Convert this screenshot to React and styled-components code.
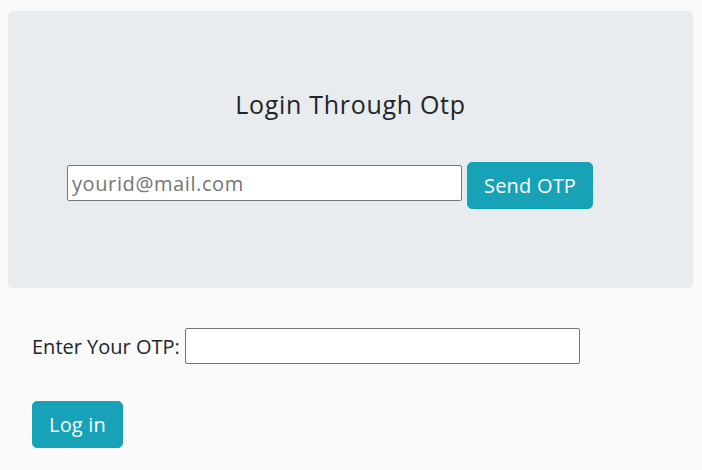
import React from "react";
import styled, { createGlobalStyle } from "styled-components";

const GlobalStyle = createGlobalStyle`
  html, body {
    margin: 0;
    padding: 0;
    background: #fafafa;
  }
  body {
    font-family: "Open Sans", "Liberation Sans", sans-serif;
    color: #212529;
  }
  * { box-sizing: border-box; }
`;

const Page = styled.div`
  width: 702px;
  padding: 11px 9px 0 8px;
`;

const Jumbotron = styled.section`
  height: 277px;
  background: #e9ecef;
  border-radius: 5px;
  padding-top: 79px;
`;

const Title = styled.h4`
  margin: 0;
  text-align: center;
  font-size: 25px;
  letter-spacing: 0.7px;
  font-weight: 400;
  line-height: 29px;
  color: #212529;
`;

const SendRow = styled.form`
  display: flex;
  align-items: flex-start;
  gap: 5px;
  margin-top: 43px;
  padding-left: 59px;
`;

const TextInput = styled.input`
  width: 395px;
  height: 36px;
  margin-top: ${(p) => p.$offset || 0}px;
  padding: 0 4px;
  border: 1px solid #767676;
  border-radius: 2px;
  background: #fff;
  font-family: inherit;
  font-size: 20px;
  letter-spacing: 0.6px;
  color: #212529;
  outline: none;
  &::placeholder {
    color: #757575;
  }
`;

const Button = styled.button`
  height: 47px;
  padding: 0 16px;
  border: 1px solid #17a2b8;
  border-radius: 5px;
  background: #17a2b8;
  color: #fff;
  font-family: inherit;
  font-size: 20px;
  letter-spacing: 0.2px;
  line-height: 1;
  cursor: pointer;
`;

const OtpSection = styled.section`
  padding: 40px 0 0 24px;
`;

const OtpRow = styled.div`
  display: flex;
  align-items: center;
  gap: 5px;
`;

const Label = styled.label`
  font-size: 20px;
  color: #212529;
`;

const LoginWrap = styled.div`
  margin-top: 37px;
`;

export default function App() {
  return (
    <>
      <GlobalStyle />
      <Page>
        <Jumbotron>
          <Title>Login Through Otp</Title>
          <SendRow onSubmit={(e) => e.preventDefault()}>
            <TextInput $offset={3} type="email" placeholder="yourid@mail.com" />
            <Button type="submit">Send OTP</Button>
          </SendRow>
        </Jumbotron>
        <OtpSection>
          <OtpRow>
            <Label htmlFor="otp">Enter Your OTP:</Label>
            <TextInput id="otp" type="text" />
          </OtpRow>
          <LoginWrap>
            <Button type="button">Log in</Button>
          </LoginWrap>
        </OtpSection>
      </Page>
    </>
  );
}
